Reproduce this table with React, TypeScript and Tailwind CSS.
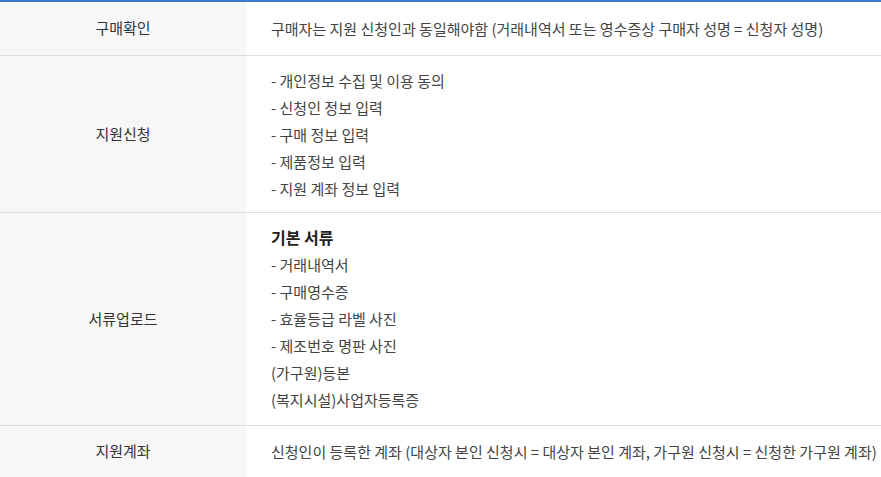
import React from "react";

const font = { fontFamily: '"Noto Sans CJK KR", "Noto Sans", sans-serif' };

function Row({
  label,
  children,
  pad,
}: {
  label: string;
  children: React.ReactNode;
  pad: string;
}) {
  return (
    <div className="flex border-b border-[#dddddd]">
      <div className="w-[246px] shrink-0 bg-[#f7f7f7] flex items-center justify-center text-[15px] text-[#333333]">
        {label}
      </div>
      <div className={`flex-1 pl-[25px] text-[15px] leading-[27px] text-[#444444] ${pad}`}>
        {children}
      </div>
    </div>
  );
}

export default function App() {
  return (
    <div className="w-[881px] h-[477px] overflow-hidden bg-white" style={font}>
      <div className="border-t-2 border-[#3a7bd5]">
        <Row label="구매확인" pad="pt-[13px] pb-[13px]">
          <div className="whitespace-nowrap">
            구매자는 지원 신청인과 동일해야함 (거래내역서 또는 영수증상 구매자 성명 = 신청자 성명)
          </div>
        </Row>
        <Row label="지원신청" pad="pt-[11px] pb-[10px]">
          <div>- 개인정보 수집 및 이용 동의</div>
          <div>- 신청인 정보 입력</div>
          <div>- 구매 정보 입력</div>
          <div>- 제품정보 입력</div>
          <div>- 지원 계좌 정보 입력</div>
        </Row>
        <Row label="서류업로드" pad="pt-[11px] pb-[12px]">
          <div className="font-bold text-[16px] text-[#222222]">기본 서류</div>
          <div>- 거래내역서</div>
          <div>- 구매영수증</div>
          <div>- 효율등급 라벨 사진</div>
          <div>- 제조번호 명판 사진</div>
          <div>(가구원)등본</div>
          <div>(복지시설)사업자등록증</div>
        </Row>
        <Row label="지원계좌" pad="pt-[12px] pb-[12px]">
          <div className="whitespace-nowrap">
            신청인이 등록한 계좌 (대상자 본인 신청시 = 대상자 본인 계좌, 가구원 신청시 = 신청한 가구원 계좌)
          </div>
        </Row>
      </div>
    </div>
  );
}
